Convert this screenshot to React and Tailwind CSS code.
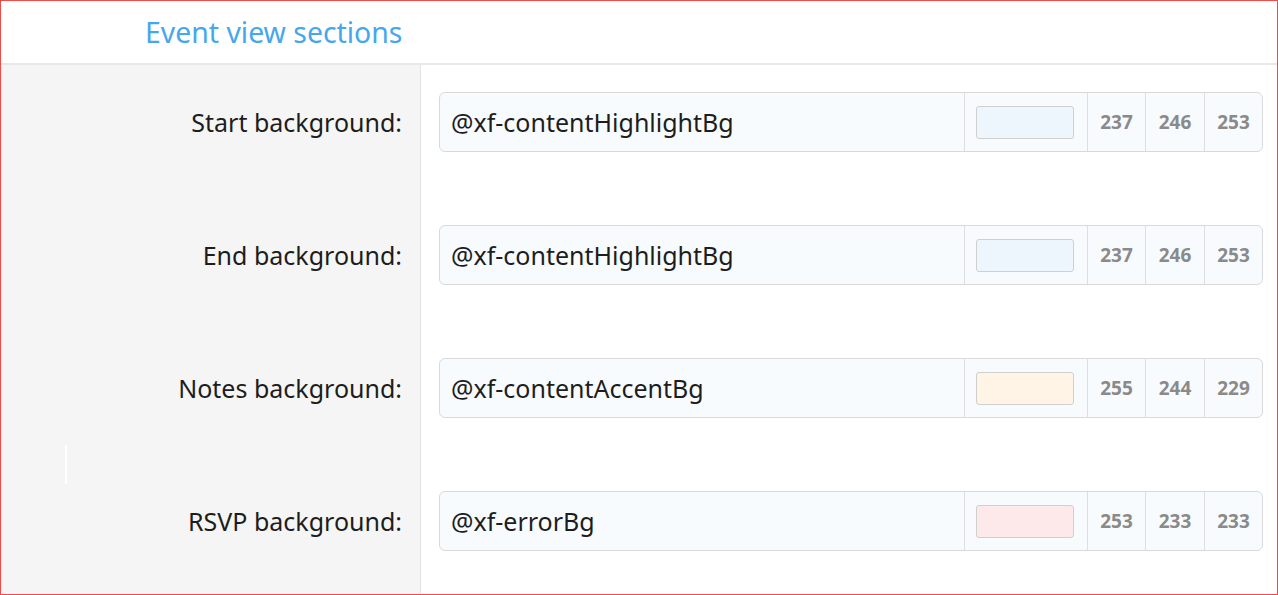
import React from "react";

const rows = [
  { label: "Start background:", value: "@xf-contentHighlightBg", swatch: "#edf6fd", rgb: [237, 246, 253] },
  { label: "End background:", value: "@xf-contentHighlightBg", swatch: "#edf6fd", rgb: [237, 246, 253] },
  { label: "Notes background:", value: "@xf-contentAccentBg", swatch: "#fff4e5", rgb: [255, 244, 229] },
  { label: "RSVP background:", value: "@xf-errorBg", swatch: "#fde9e9", rgb: [253, 233, 233] },
];

const cellW = ["w-[58px]", "w-[59px]", "w-[58px]"];

export default function App() {
  return (
    <div
      className="relative w-[1278px] h-[595px] overflow-hidden border border-[#f04a4a] bg-white flex flex-col text-[#1d1d1d]"
      style={{ fontFamily: '"Noto Sans", "Open Sans", sans-serif' }}
    >
      <div className="h-[64px] shrink-0 border-b-2 border-[#e8e8e8] flex items-center pl-[144px]">
        <h2 className="text-[28.4px] font-normal text-[#47a7eb] leading-none">Event view sections</h2>
      </div>
      <div className="flex flex-col">
        {rows.map((r, i) => (
          <div key={i} className="flex h-[133px] shrink-0">
            <div className="w-[420px] shrink-0 bg-[#f5f5f5] border-r border-[#e2e2e2] pt-[27px] pr-[18px] flex justify-end">
              <div className="h-[60px] flex items-center text-[25px] leading-none pt-[1px]">{r.label}</div>
            </div>
            <div className="flex-1 pt-[27px] pl-[18px] pr-[14px]">
              <div className="h-[60px] flex rounded-[6px] border border-[#d9d9d9] bg-[#f8fbfd] overflow-hidden">
                <div className="flex-1 flex items-center pl-[11px] text-[25px] leading-none pt-[1px]">{r.value}</div>
                <div className="w-[123px] shrink-0 border-l border-[#dedede] flex items-center pl-[11px]">
                  <div
                    className="w-[98px] h-[33px] rounded-[3px] border border-[#cfcfcf]"
                    style={{ backgroundColor: r.swatch }}
                  />
                </div>
                {r.rgb.map((n, j) => (
                  <div
                    key={j}
                    className={`shrink-0 border-l border-[#dedede] flex items-center justify-center text-[19px] font-bold text-[#8a8a8a] ${cellW[j]}`}
                  >
                    {n}
                  </div>
                ))}
              </div>
            </div>
          </div>
        ))}
      </div>
      <div className="absolute left-[64px] top-[444px] w-[2px] h-[39px] bg-white" />
    </div>
  );
}
